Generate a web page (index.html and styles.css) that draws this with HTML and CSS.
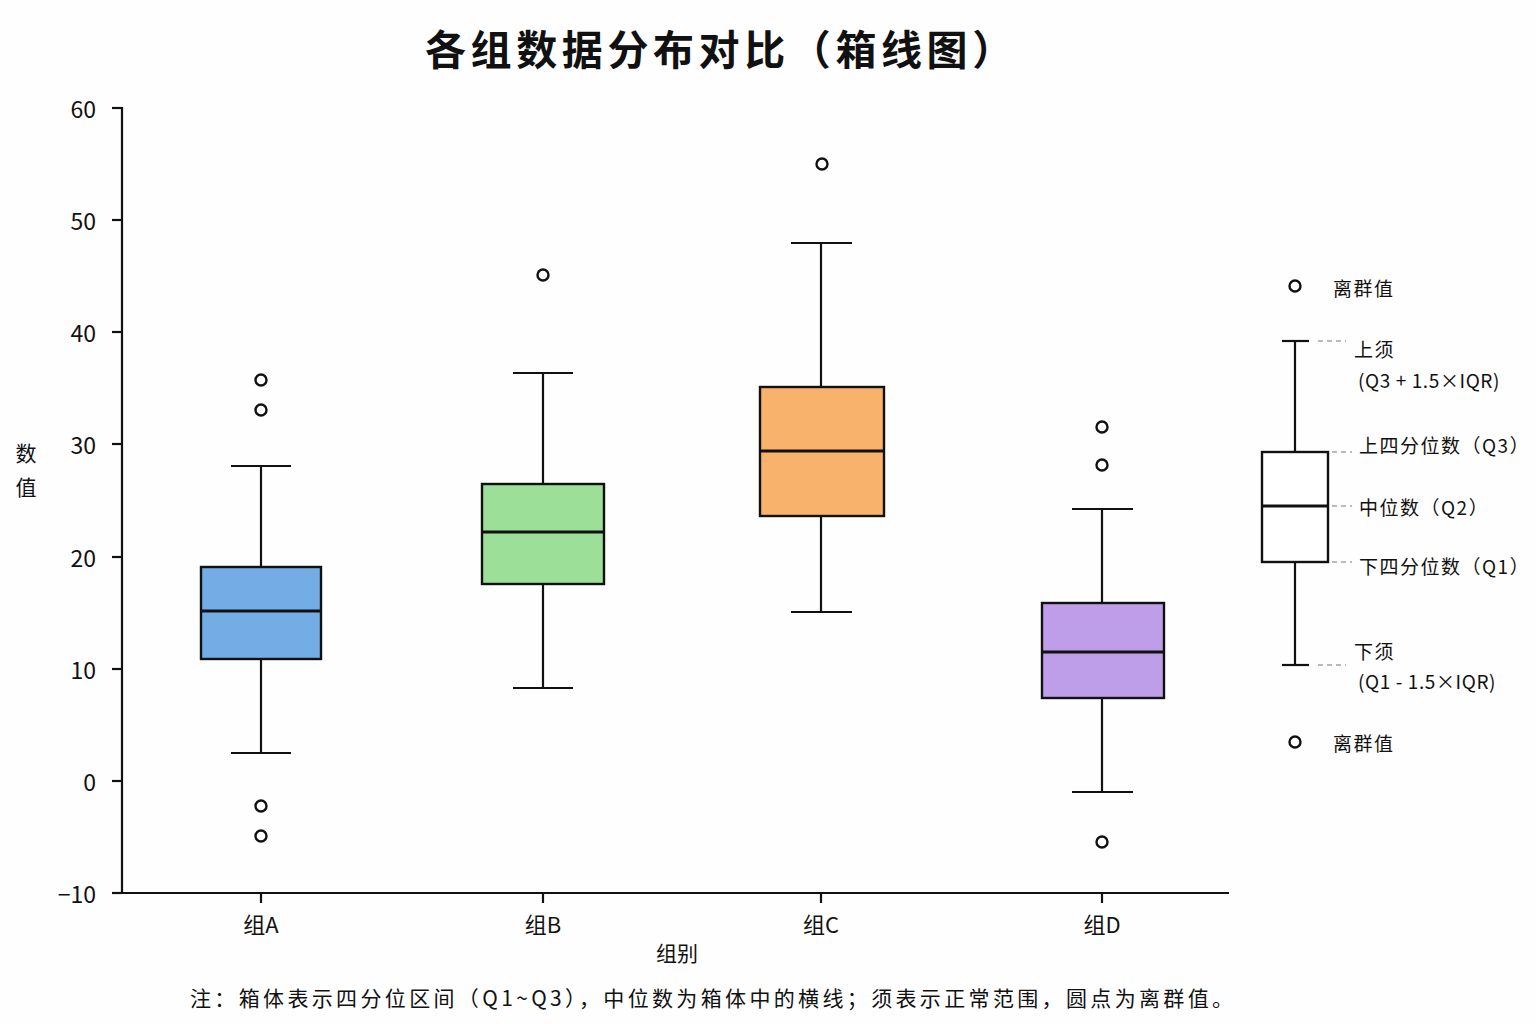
FILE: index.html
```html
<!DOCTYPE html>
<html lang="zh-CN">
<head>
<meta charset="utf-8">
<title>各组数据分布对比（箱线图）</title>
<link rel="stylesheet" href="styles.css">
</head>
<body>
<div class="page">
  <h1 class="title">各组数据分布对比（箱线图）</h1>
  <svg class="chart" width="1536" height="890" viewBox="0 84 1536 890" xmlns="http://www.w3.org/2000/svg">
    <!-- axes -->
    <g class="axis">
      <line x1="122" y1="107" x2="122" y2="894"/>
      <line x1="121" y1="893" x2="1229" y2="893"/>
      <line x1="112" y1="108" x2="122" y2="108"/>
      <line x1="112" y1="220" x2="122" y2="220"/>
      <line x1="112" y1="332" x2="122" y2="332"/>
      <line x1="112" y1="444" x2="122" y2="444"/>
      <line x1="112" y1="557" x2="122" y2="557"/>
      <line x1="112" y1="669" x2="122" y2="669"/>
      <line x1="112" y1="781" x2="122" y2="781"/>
      <line x1="112" y1="893" x2="122" y2="893"/>
      <line x1="261" y1="893" x2="261" y2="903"/>
      <line x1="543" y1="893" x2="543" y2="903"/>
      <line x1="821" y1="893" x2="821" y2="903"/>
      <line x1="1102" y1="893" x2="1102" y2="903"/>
    </g>
    <g class="ticklabel">
      <text x="96" y="108">60</text>
      <text x="96" y="220">50</text>
      <text x="96" y="332">40</text>
      <text x="96" y="444">30</text>
      <text x="96" y="557">20</text>
      <text x="96" y="669">10</text>
      <text x="96" y="781">0</text>
      <text x="96" y="893">−10</text>
    </g>
    <g class="axislabel">
      <text x="26" y="452">数</text>
      <text x="26" y="486">值</text>
      <text x="677" y="952">组别</text>
    </g>
    <g class="catlabel">
      <text x="261" y="923">组A</text>
      <text x="543" y="923">组B</text>
      <text x="821" y="923">组C</text>
      <text x="1102" y="923">组D</text>
    </g>

    <!-- Group A -->
    <g class="box">
      <line class="whisker" x1="261" y1="466" x2="261" y2="567"/>
      <line class="whisker" x1="261" y1="659" x2="261" y2="753"/>
      <line class="whisker" x1="231" y1="466" x2="291" y2="466"/>
      <line class="whisker" x1="231" y1="753" x2="291" y2="753"/>
      <rect class="fill-a" x="201" y="567" width="120" height="92"/>
      <line class="median" x1="201" y1="611" x2="321" y2="611"/>
      <circle class="outlier" cx="261" cy="380" r="5.5"/>
      <circle class="outlier" cx="261" cy="410" r="5.5"/>
      <circle class="outlier" cx="261" cy="806" r="5.5"/>
      <circle class="outlier" cx="261" cy="836" r="5.5"/>
    </g>
    <!-- Group B -->
    <g class="box">
      <line class="whisker" x1="543" y1="373" x2="543" y2="484"/>
      <line class="whisker" x1="543" y1="584" x2="543" y2="688"/>
      <line class="whisker" x1="513" y1="373" x2="573" y2="373"/>
      <line class="whisker" x1="513" y1="688" x2="573" y2="688"/>
      <rect class="fill-b" x="482" y="484" width="122" height="100"/>
      <line class="median" x1="482" y1="532" x2="604" y2="532"/>
      <circle class="outlier" cx="543" cy="275" r="5.5"/>
    </g>
    <!-- Group C -->
    <g class="box">
      <line class="whisker" x1="821" y1="243" x2="821" y2="387"/>
      <line class="whisker" x1="821" y1="516" x2="821" y2="612"/>
      <line class="whisker" x1="791" y1="243" x2="852" y2="243"/>
      <line class="whisker" x1="791" y1="612" x2="852" y2="612"/>
      <rect class="fill-c" x="760" y="387" width="124" height="129"/>
      <line class="median" x1="760" y1="451" x2="884" y2="451"/>
      <circle class="outlier" cx="822" cy="164" r="5.5"/>
    </g>
    <!-- Group D -->
    <g class="box">
      <line class="whisker" x1="1102" y1="509" x2="1102" y2="603"/>
      <line class="whisker" x1="1102" y1="698" x2="1102" y2="792"/>
      <line class="whisker" x1="1072" y1="509" x2="1133" y2="509"/>
      <line class="whisker" x1="1072" y1="792" x2="1133" y2="792"/>
      <rect class="fill-d" x="1042" y="603" width="122" height="95"/>
      <line class="median" x1="1042" y1="652" x2="1164" y2="652"/>
      <circle class="outlier" cx="1102" cy="427" r="5.5"/>
      <circle class="outlier" cx="1102" cy="465" r="5.5"/>
      <circle class="outlier" cx="1102" cy="842" r="5.5"/>
    </g>

    <!-- Legend -->
    <g class="box legend">
      <circle class="outlier" cx="1295" cy="286" r="5.5"/>
      <line class="whisker" x1="1295" y1="341" x2="1295" y2="452"/>
      <line class="whisker" x1="1295" y1="562" x2="1295" y2="665"/>
      <line class="whisker" x1="1282" y1="341" x2="1309" y2="341"/>
      <line class="whisker" x1="1282" y1="665" x2="1309" y2="665"/>
      <rect class="fill-w" x="1262" y="452" width="66" height="110"/>
      <line class="median" x1="1262" y1="506" x2="1328" y2="506"/>
      <circle class="outlier" cx="1295" cy="742" r="5.5"/>
      <line class="dash" x1="1318" y1="341" x2="1346" y2="341"/>
      <line class="dash" x1="1332" y1="452" x2="1352" y2="452"/>
      <line class="dash" x1="1332" y1="506" x2="1352" y2="506"/>
      <line class="dash" x1="1332" y1="562" x2="1352" y2="562"/>
      <line class="dash" x1="1318" y1="665" x2="1346" y2="665"/>
    </g>
    <g class="legendlabel">
      <text x="1333" y="287">离群值</text>
      <text x="1354" y="348">上须</text>
      <text class="formula" x="1358" y="379">(Q3 + 1.5×IQR)</text>
      <text x="1359" y="444">上四分位数（Q3）</text>
      <text x="1359" y="506">中位数（Q2）</text>
      <text x="1359" y="565">下四分位数（Q1）</text>
      <text x="1354" y="650">下须</text>
      <text class="formula" x="1358" y="680">(Q1 - 1.5×IQR)</text>
      <text x="1333" y="742">离群值</text>
    </g>
  </svg>
  <p class="note">注：箱体表示四分位区间（Q1~Q3），中位数为箱体中的横线；须表示正常范围，圆点为离群值。</p>
</div>
</body>
</html>
```
FILE: styles.css
```css
html, body {
  margin: 0;
  padding: 0;
  background: #ffffff;
}

body {
  font-family: "Noto Sans CJK SC", "Noto Sans", sans-serif;
  color: #111111;
}

.page {
  width: 1536px;
  height: 1024px;
  display: flex;
  flex-direction: column;
  align-items: stretch;
  overflow: hidden;
  background: #fefefe;
}

.title {
  margin: 0;
  height: 84px;
  padding-top: 6px;
  box-sizing: border-box;
  line-height: 82px;
  font-size: 41px;
  font-weight: 700;
  letter-spacing: 4.6px;
  text-align: left;
  padding-left: 425px;
  color: #111111;
  white-space: nowrap;
}

.chart {
  display: block;
  width: 1536px;
  height: 890px;
  flex: none;
}

.note {
  margin: 0;
  height: 50px;
  line-height: 46px;
  font-size: 21px;
  letter-spacing: 3.35px;
  padding-left: 190px;
  color: #111111;
  white-space: nowrap;
}

.axis line {
  stroke: #111111;
  stroke-width: 2.2;
}

.ticklabel text {
  font-family: "Noto Sans CJK SC", "Noto Sans", sans-serif;
  font-size: 23px;
  text-anchor: end;
  dominant-baseline: central;
  fill: #111111;
}

.axislabel text {
  font-size: 21px;
  text-anchor: middle;
  dominant-baseline: central;
  fill: #111111;
}

.catlabel text {
  font-size: 22px;
  text-anchor: middle;
  dominant-baseline: central;
  fill: #111111;
}

.box .whisker {
  stroke: #111111;
  stroke-width: 2.2;
}

.box rect {
  stroke: #111111;
  stroke-width: 2.4;
}

.box .median {
  stroke: #111111;
  stroke-width: 3;
}

.box .outlier {
  fill: #ffffff;
  stroke: #111111;
  stroke-width: 2.4;
}

.fill-a { fill: #74ade6; }
.fill-b { fill: #9cdf98; }
.fill-c { fill: #f9b26b; }
.fill-d { fill: #bf9ee9; }
.fill-w { fill: #ffffff; }

.legend .dash {
  stroke: #777777;
  stroke-width: 1.2;
  stroke-dasharray: 5 4;
}

.legendlabel text {
  font-size: 19px;
  dominant-baseline: central;
  fill: #111111;
  letter-spacing: 1.5px;
}

.legendlabel .formula {
  font-size: 19px;
  letter-spacing: 0.6px;
}
```
